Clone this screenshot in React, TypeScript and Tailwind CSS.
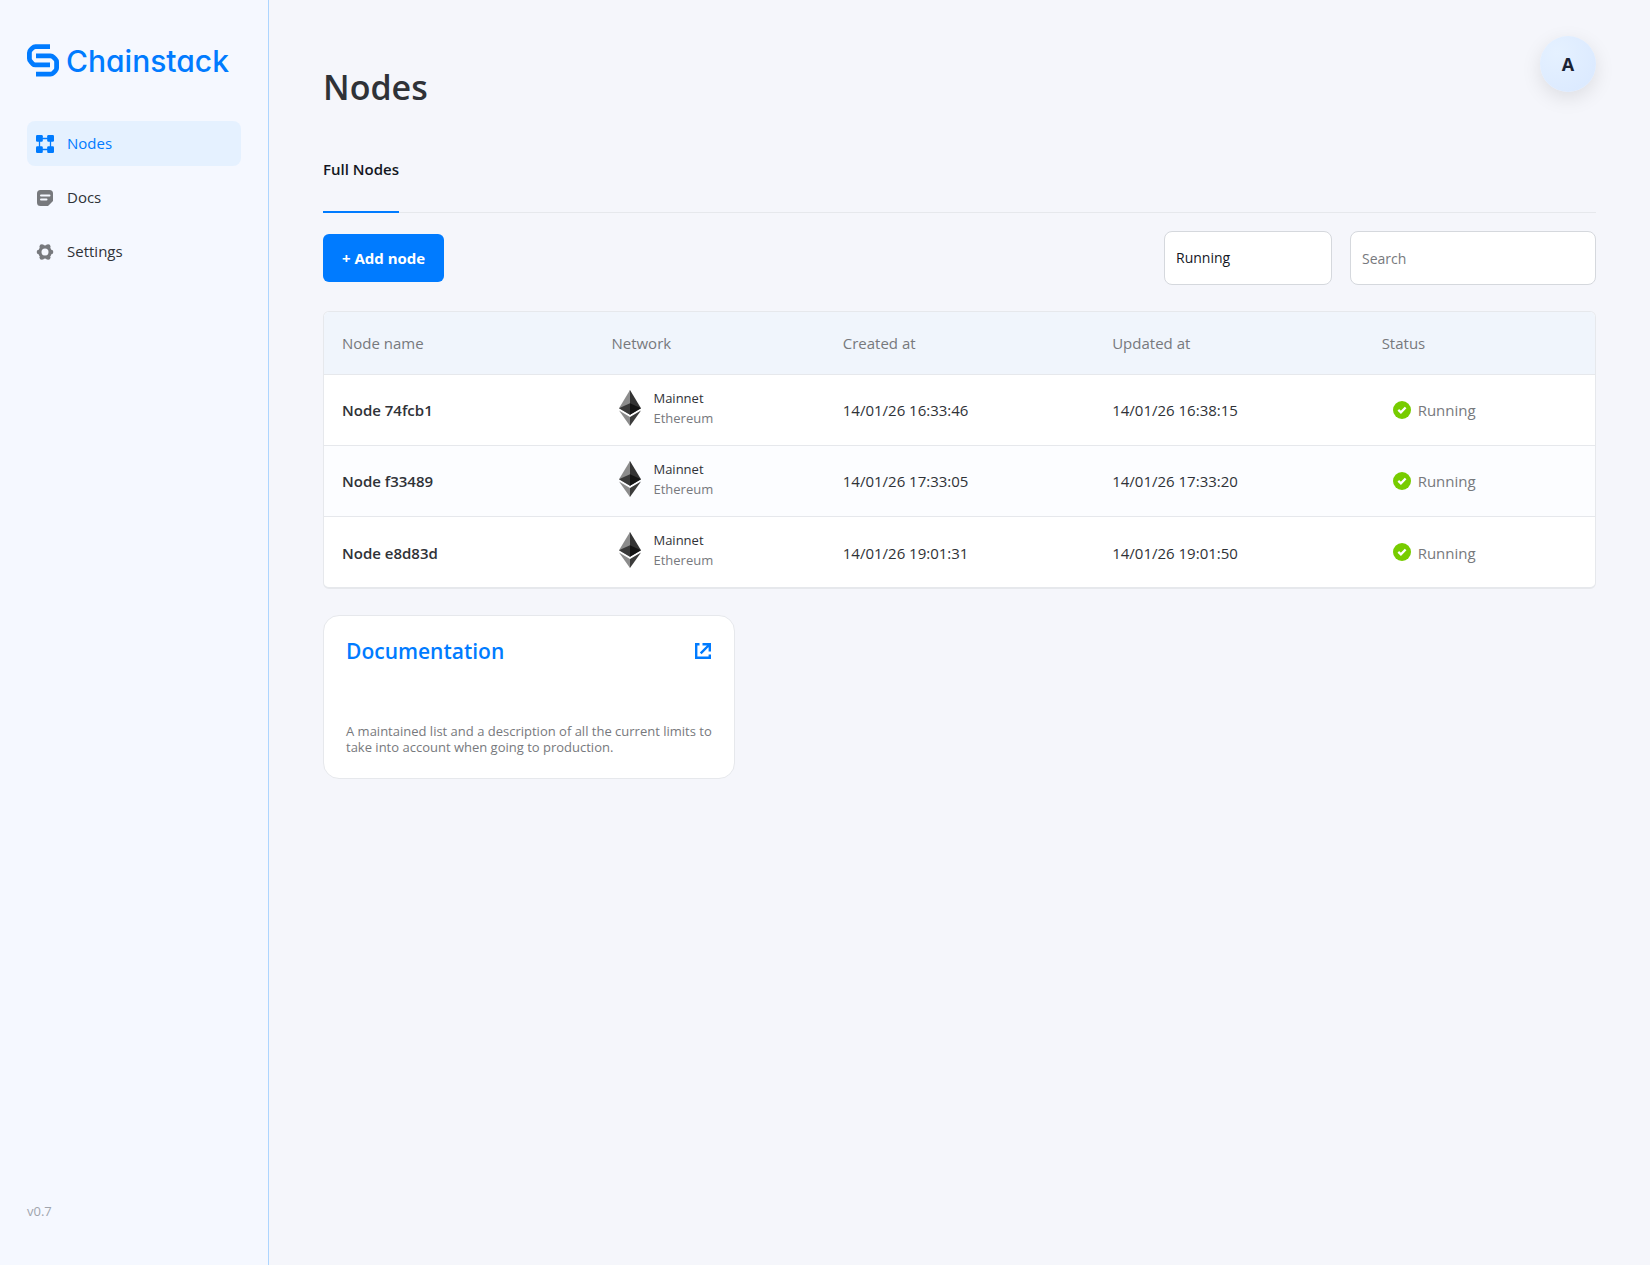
import React from "react";

type Node = { name: string; created: string; updated: string };

const nodes: Node[] = [
  { name: "Node 74fcb1", created: "14/01/26 16:33:46", updated: "14/01/26 16:38:15" },
  { name: "Node f33489", created: "14/01/26 17:33:05", updated: "14/01/26 17:33:20" },
  { name: "Node e8d83d", created: "14/01/26 19:01:31", updated: "14/01/26 19:01:50" },
];

function LogoMark() {
  return (
    <svg width="32" height="33" viewBox="0 0 32 33" fill="none" stroke="#007bff" strokeWidth="4.8" aria-hidden="true">
      <path d="M23 2.700H8.500Q6.800 2.700 5.600 3.900L3.600 5.900Q2.400 7.100 2.400 8.800V14.500Q2.400 16.200 3.600 17.400L5.600 19.700Q6.800 20.900 8.500 20.900H23" />
      <path d="M9 11.900H23.500Q25.200 11.900 26.400 13.100L28.400 15.100Q29.600 16.300 29.600 18V24Q29.600 25.700 28.400 26.900L26.400 28.900Q25.200 30.100 23.500 30.100H9" />
    </svg>
  );
}

function NodesIcon() {
  return (
    <svg width="18" height="18" viewBox="0 0 18 18" fill="#007bff" aria-hidden="true">
      <rect width="6.800" height="6.800" rx="1.200" />
      <rect x="11.200" width="6.800" height="6.800" rx="1.200" />
      <rect y="11.200" width="6.800" height="6.800" rx="1.200" />
      <rect x="11.200" y="11.200" width="6.800" height="6.800" rx="1.200" />
      <path d="M3.500 3.500h11v11h-11z" fill="none" stroke="#007bff" strokeWidth="1.300" />
    </svg>
  );
}

function DocsIcon() {
  return (
    <svg width="18" height="18" viewBox="0 0 18 18" aria-hidden="true">
      <path d="M4.500 1h9A3.500 3.500 0 0 1 17 4.500V12l-5 5H4.500A3.500 3.500 0 0 1 1 13.500v-9A3.500 3.500 0 0 1 4.500 1z" fill="#77797d" />
      <path d="M5 6.500h8.500M5 10.500h5.500" stroke="#f5f8ff" strokeWidth="2" strokeLinecap="round" />
    </svg>
  );
}

function SettingsIcon() {
  return (
    <svg width="18" height="18" viewBox="0 0 18 18" fill="#77797d" aria-hidden="true">
      <circle cx="9" cy="9" r="6.800" />
      <circle cx="5.900" cy="3.600" r="2.400" />
      <circle cx="12.100" cy="3.600" r="2.400" />
      <circle cx="15.100" cy="9" r="2.200" />
      <circle cx="12.100" cy="14.400" r="2.400" />
      <circle cx="5.900" cy="14.400" r="2.400" />
      <circle cx="2.900" cy="9" r="2.200" />
      <circle cx="9" cy="9" r="3.500" fill="#f5f8ff" />
    </svg>
  );
}

function EthereumIcon() {
  return (
    <svg width="22" height="36" viewBox="0 0 256 417" preserveAspectRatio="none" aria-hidden="true">
      <path fill="#343434" d="M127.961 0l-2.795 9.500v275.668l2.795 2.790 127.962-75.638z" />
      <path fill="#8c8c8c" d="M127.962 0L0 212.320l127.962 75.639V154.158z" />
      <path fill="#3c3c3b" d="M127.961 312.187l-1.575 1.920v98.199l1.575 4.600L256 236.587z" />
      <path fill="#8c8c8c" d="M127.962 416.905v-104.720L0 236.585z" />
      <path fill="#141414" d="M127.961 287.958l127.960-75.637-127.960-58.162z" />
      <path fill="#393939" d="M0 212.320l127.960 75.638v-133.800z" />
    </svg>
  );
}

function CheckIcon() {
  return (
    <svg width="18" height="18" viewBox="0 0 18 18" aria-hidden="true">
      <circle cx="9" cy="9" r="9" fill="#77cc00" />
      <path d="M5.300 8.900l2.600 2.500 4.700-4.900" fill="none" stroke="#fff" strokeWidth="2.300" />
    </svg>
  );
}

function ExternalIcon() {
  return (
    <svg width="16" height="16" viewBox="0 0 16 16" fill="none" stroke="#007bff" strokeWidth="2.400" aria-hidden="true">
      <path d="M4.500 1.200H1.200v13.600h13.600v-3.300" />
      <path d="M7.500 1.200h7.300v7.300M14.500 1.500L5.700 10.300" />
    </svg>
  );
}

const links = [
  { label: "Nodes", icon: <NodesIcon />, active: true },
  { label: "Docs", icon: <DocsIcon />, active: false },
  { label: "Settings", icon: <SettingsIcon />, active: false },
];

export default function App() {
  return (
    <div className="flex min-h-screen bg-[#f5f6fb] font-['Segoe_UI','Open_Sans',sans-serif] text-[#2f3237]">
      <aside className="flex w-[269px] shrink-0 flex-col border-r border-[#add5ff] bg-[#f5f8ff] px-[27px] pt-11 pb-11">
        <a href="#" className="flex h-[33px] items-center gap-[7px] text-[#007bff]">
          <LogoMark />
          <span className="font-['Inter',sans-serif] text-[30px] leading-[35px] font-medium [font-feature-settings:'cv11'] pt-[2px]">Chainstack</span>
        </a>
        <nav className="mt-11 flex flex-col gap-[9px]">
          {links.map((l) => (
            <a
              key={l.label}
              href="#"
              className={
                l.active
                  ? "flex h-[45px] items-center gap-[13px] rounded-lg bg-[#e5f1ff] px-[9px] text-[15px] text-[#007bff]"
                  : "flex h-[45px] items-center gap-[13px] rounded-lg px-[9px] text-[15px]"
              }
            >
              {l.icon}
              {l.label}
            </a>
          ))}
        </nav>
        <p className="mt-auto text-[13px] leading-5 text-[#a0a5ad]">v0.7</p>
      </aside>

      <main className="min-w-0 flex-1 px-[54px] pt-9">
        <header className="flex h-[102px] items-start justify-between">
          <h1 className="pt-6 text-[34px] leading-[54px] font-semibold">Nodes</h1>
          <button
            type="button"
            className="size-14 rounded-full bg-radial-[at_30%_30%] from-[#e5f1ff] to-[#d9e8ff] text-lg font-bold text-[#1a2233] shadow-[0_6px_20px_rgba(0,0,0,0.1)]"
          >
            A
          </button>
        </header>

        <div role="tablist" className="flex border-b border-[#e6e8ec]">
          <button
            type="button"
            role="tab"
            aria-selected="true"
            className="-mb-px flex h-[75px] items-start border-b-2 border-[#007bff] pt-[19px] text-[15px] leading-6 font-semibold text-[#14171f]"
          >
            Full Nodes
          </button>
        </div>

        <div className="mt-[18px] flex items-center">
          <button type="button" className="h-12 rounded-md bg-[#007bff] px-[19px] text-[15px] font-bold text-white">
            + Add node
          </button>
          <select
            aria-label="Status"
            className="ml-auto h-[54px] w-[168px] appearance-none rounded-lg border border-[#d5d8dd] bg-white px-[11px] text-sm text-[#14171f]"
          >
            <option>Running</option>
          </select>
          <input
            type="search"
            aria-label="Search"
            placeholder="Search"
            className="ml-[18px] h-[54px] w-[246px] rounded-lg border border-[#d5d8dd] bg-white px-[11px] text-sm placeholder:text-[#77797d]"
          />
        </div>

        <div className="mt-[26px] overflow-hidden rounded-md border border-b-2 border-[#e6e8ec] bg-white">
          <table className="w-full table-fixed text-left text-[15px]">
            <colgroup>
              <col className="w-[21.2%]" />
              <col className="w-[18.2%]" />
              <col className="w-[21.2%]" />
              <col className="w-[21.2%]" />
              <col className="w-[18.2%]" />
            </colgroup>
            <thead>
              <tr className="h-[62px] bg-[#f0f5fc] text-[#77797d]">
                {["Node name", "Network", "Created at", "Updated at", "Status"].map((h) => (
                  <th key={h} className="px-[18px] font-normal">
                    {h}
                  </th>
                ))}
              </tr>
            </thead>
            <tbody>
              {nodes.map((n) => (
                <tr key={n.name} className="h-[71px] border-t border-[#e6e8ec] even:bg-[#fcfdff]">
                  <td className="px-[18px] pt-[2px] font-semibold">{n.name}</td>
                  <td className="px-[18px] pb-[3px]">
                    <div className="flex items-center gap-3 pl-2">
                      <EthereumIcon />
                      <div className="text-[13px] leading-5">
                        <div>Mainnet</div>
                        <div className="text-[#77797d]">Ethereum</div>
                      </div>
                    </div>
                  </td>
                  <td className="px-[18px] pt-[2px]">{n.created}</td>
                  <td className="px-[18px] pt-[2px]">{n.updated}</td>
                  <td className="px-[18px]">
                    <div className="flex items-center gap-[7px] pl-[11px] text-[#77797d]">
                      <CheckIcon />
                      <span className="pt-[2px]">Running</span>
                    </div>
                  </td>
                </tr>
              ))}
            </tbody>
          </table>
        </div>

        <a href="#" className="mt-[26px] flex h-[164px] w-[412px] flex-col justify-between rounded-2xl border border-[#e6e8ec] bg-white pr-[23px] pl-[22px] pt-[19px] pb-[23px]">
          <span className="flex items-center justify-between">
            <span className="text-[21px] leading-8 font-semibold text-[#007bff]">Documentation</span>
            <ExternalIcon />
          </span>
          <span className="-mr-3 text-[13px] leading-4 text-[#77797d]">
            A maintained list and a description of all the current limits to take into account when going to production.
          </span>
        </a>
      </main>
    </div>
  );
}
